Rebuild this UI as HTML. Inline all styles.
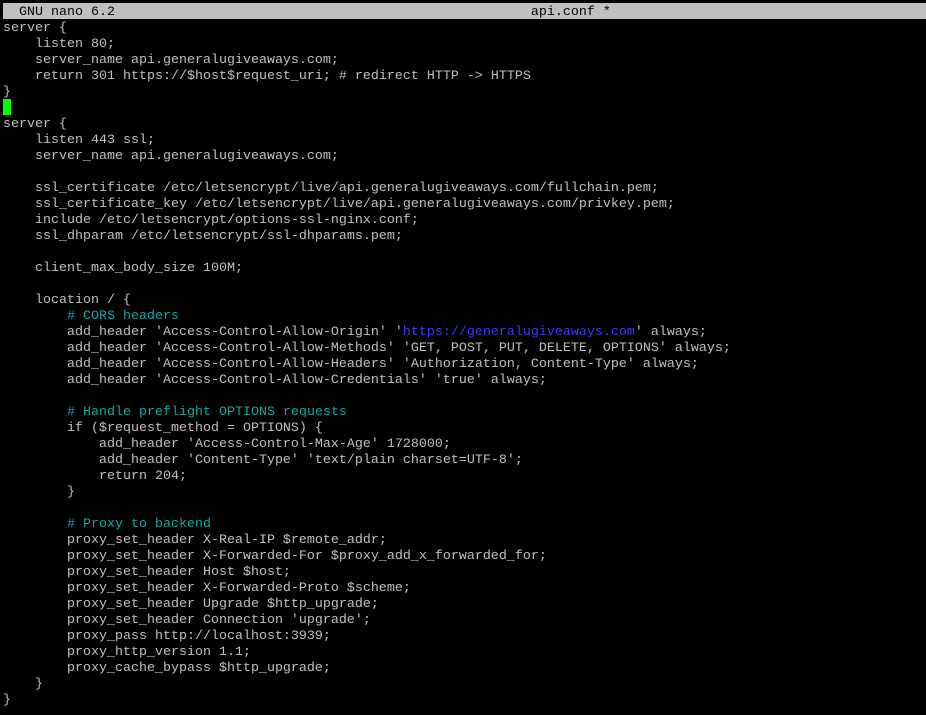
<!DOCTYPE html>
<html><head><meta charset="utf-8"><style>
html,body{margin:0;padding:0;background:#000;width:926px;height:715px;overflow:hidden}
#b{position:absolute;left:3px;top:3px;width:923px;height:16px;background:#c0c0c0}
pre{position:absolute;left:3px;top:5px;margin:0;font-family:"Liberation Mono",monospace;font-size:13.33px;line-height:16px;color:#c0c0c0;white-space:pre}
.bar{color:#000}
.c{color:#0aa8a8}.u{color:#3a3af0}
.cur{background:#00ff00;color:#00ff00;display:inline-block;width:8px;height:16px;vertical-align:top;margin-top:-2px}
</style></head><body><div id="b"></div><pre><span class="bar">  GNU nano 6.2                                                    api.conf *</span>
server {
    listen 80;
    server_name api.generalugiveaways.com;
    return 301 https://$host$request_uri; # redirect HTTP -> HTTPS
}
<span class="cur"></span>
server {
    listen 443 ssl;
    server_name api.generalugiveaways.com;

    ssl_certificate /etc/letsencrypt/live/api.generalugiveaways.com/fullchain.pem;
    ssl_certificate_key /etc/letsencrypt/live/api.generalugiveaways.com/privkey.pem;
    include /etc/letsencrypt/options-ssl-nginx.conf;
    ssl_dhparam /etc/letsencrypt/ssl-dhparams.pem;

    client_max_body_size 100M;

    location / {
        <span class="c"># CORS headers</span>
        add_header 'Access-Control-Allow-Origin' '<span class="u">https://generalugiveaways.com</span>' always;
        add_header 'Access-Control-Allow-Methods' 'GET, POST, PUT, DELETE, OPTIONS' always;
        add_header 'Access-Control-Allow-Headers' 'Authorization, Content-Type' always;
        add_header 'Access-Control-Allow-Credentials' 'true' always;

        <span class="c"># Handle preflight OPTIONS requests</span>
        if ($request_method = OPTIONS) {
            add_header 'Access-Control-Max-Age' 1728000;
            add_header 'Content-Type' 'text/plain charset=UTF-8';
            return 204;
        }

        <span class="c"># Proxy to backend</span>
        proxy_set_header X-Real-IP $remote_addr;
        proxy_set_header X-Forwarded-For $proxy_add_x_forwarded_for;
        proxy_set_header Host $host;
        proxy_set_header X-Forwarded-Proto $scheme;
        proxy_set_header Upgrade $http_upgrade;
        proxy_set_header Connection 'upgrade';
        proxy_pass http://localhost:3939;
        proxy_http_version 1.1;
        proxy_cache_bypass $http_upgrade;
    }
}</pre></body></html>
